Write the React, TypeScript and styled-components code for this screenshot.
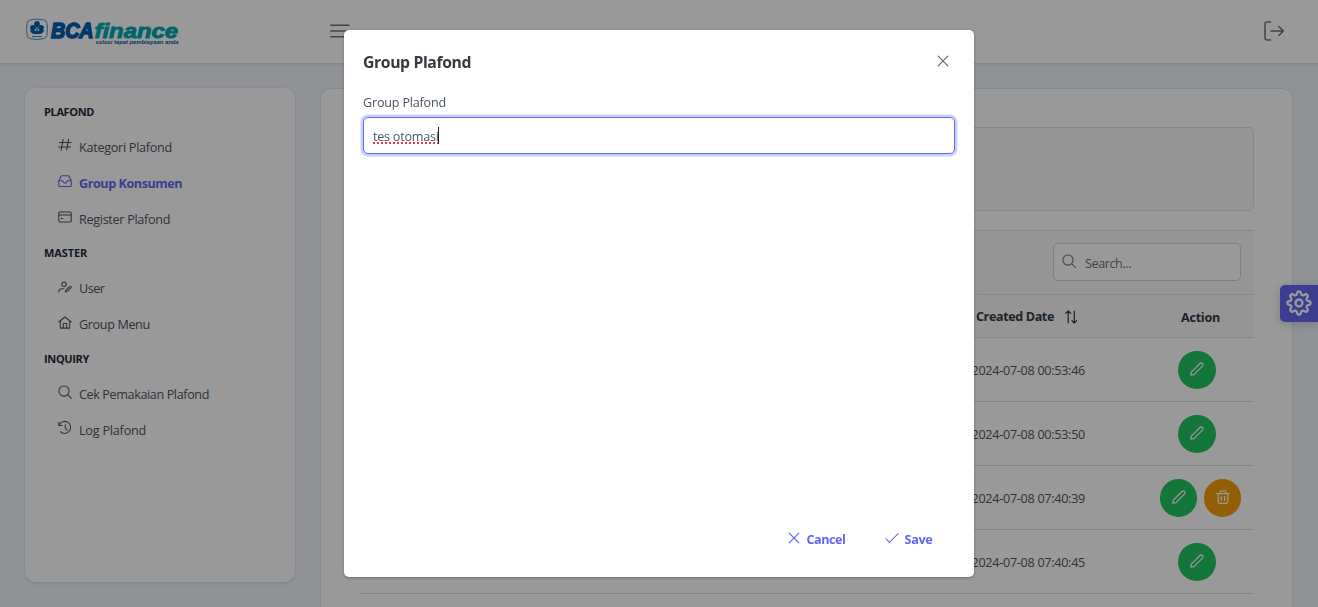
import React from 'react';
import styled, { createGlobalStyle, css } from 'styled-components';

const GlobalStyle = createGlobalStyle`
  *, *::before, *::after { box-sizing: border-box; }
  html, body { margin: 0; height: 607px; overflow: hidden; }
  body {
    background: #eff3f8;
    color: #4b5563;
    font-family: 'Open Sans', 'Noto Sans', sans-serif;
    font-size: 12.6px;
    line-height: 18px;
  }
`;

const cardShadow = css`
  box-shadow: 0 3px 5px rgba(0, 0, 0, 0.02), 0 0 2px rgba(0, 0, 0, 0.05), 0 1px 4px rgba(0, 0, 0, 0.08);
`;

/* ---------- icons ---------- */

const Icon = styled.svg<{ $size?: number }>`
  display: block;
  flex: none;
  width: ${({ $size = 14 }) => $size}px;
  height: ${({ $size = 14 }) => $size}px;
  fill: none;
  stroke: currentColor;
  stroke-width: 1.05;
  stroke-linecap: round;
  stroke-linejoin: round;
  overflow: visible;
`;

const HashIcon = () => (
  <Icon viewBox="0 0 14 14">
    <path d="M5.2 1.2 3.2 12.2M10.6 1.2 8.6 12.2M1.4 4.4h11.8M.6 9h11.8" />
  </Icon>
);
const InboxIcon = () => (
  <Icon viewBox="0 0 14 14">
    <path d="M.7 7 2.9 2.3Q3.2 1.7 3.9 1.7h6.2q.7 0 1 .6L13.3 7v4.4q0 1-1 1H1.7q-1 0-1-1ZM.9 6.7h3.4c.5 0 .6.3.8.8.4 1 .9 1.6 1.9 1.6s1.5-.6 1.9-1.6c.2-.5.3-.8.8-.8h3.4" />
  </Icon>
);
const CardIcon = () => (
  <Icon viewBox="0 0 14 14">
    <rect x=".8" y="2" width="12.4" height="10" rx="1" />
    <path d="M.8 5h12.4M3.1 8.5h1.7" />
  </Icon>
);
const UserEditIcon = () => (
  <Icon viewBox="0 0 14 14">
    <circle cx="6" cy="4.2" r="2.2" />
    <path d="M.7 12c0-2.2 1.5-3.3 3.6-3.3h1.5M7.4 12l.3-1.7 3.9-3.7c.9-.9 2.2.4 1.3 1.3L9 11.6Z" />
  </Icon>
);
const HomeIcon = () => (
  <Icon viewBox="0 0 14 14">
    <path d="M.7 6 7 1l6.3 5M2.3 4.9v7.2h9.4V4.9M5.3 12V7.4h3.4V12" />
  </Icon>
);
const SearchIcon = () => (
  <Icon viewBox="0 0 14 14">
    <circle cx="6" cy="6" r="5.1" />
    <path d="m9.8 9.8 3.6 3.6" />
  </Icon>
);
const HistoryIcon = () => (
  <Icon viewBox="0 0 14 14">
    <path d="M.8 1.3v3.2H4M1 4.3a6 6 0 1 1 1.4 6.4M7.3 3.7v3.6l2.2 1.9" />
  </Icon>
);
const MenuIcon = () => (
  <Icon viewBox="0 0 20 20" $size={20}>
    <path strokeWidth="1.6" d="M.8 4.2h18M.8 10h18M.8 15.7h18" />
  </Icon>
);
const LogoutIcon = () => (
  <Icon viewBox="0 0 20 20" $size={20}>
    <path strokeWidth="1.5" d="M6.5 1H2.7Q1 1 1 2.7v14.6Q1 19 2.7 19h3.8M7 10h12.3M14.8 5.5l4.5 4.5-4.5 4.5" />
  </Icon>
);
const TimesIcon = () => (
  <Icon viewBox="0 0 12 12" $size={12}>
    <path strokeWidth="1.15" d="m1.2 1.2 9.6 9.6M10.8 1.2 1.2 10.8" />
  </Icon>
);
const CheckIcon = () => (
  <Icon viewBox="0 0 14 12">
    <path d="m.8 6.7 3.7 3.7 8.7-8.7" />
  </Icon>
);
const SortIcon = () => (
  <Icon viewBox="0 0 14 14">
    <path strokeWidth="1.2" d="M4.2 13V.9M1.7 3.4 4.2.9l2.5 2.5M10.3 1v12M7.9 10.6l2.4 2.4 2.4-2.4" />
  </Icon>
);
const PencilIcon = () => (
  <Icon viewBox="0 0 14 14">
    <path strokeWidth="1.2" d="m.8 13.2.5-3.1L9.9 1.5c1.7-1.7 4.3.9 2.6 2.6L3.9 12.7Z" />
  </Icon>
);
const TrashIcon = () => (
  <Icon viewBox="0 0 14 14">
    <path strokeWidth="1.2" d="M.7 3.6h12.6M2.2 3.6v8q0 1.7 1.7 1.7h6.2q1.7 0 1.7-1.7v-8M4.2 3.4V1.9Q4.2.8 5.3.8h3.4q1.1 0 1.1 1.1v1.5M5.4 6.5v4M8.6 6.5v4" />
  </Icon>
);
const GearIcon = () => {
  const points: string[] = [];
  for (let i = 0; i <= 160; i += 1) {
    const a = (i / 160) * Math.PI * 2;
    const wave = Math.cos(a * 8);
    const r = 10 + 1.6 * Math.tanh(wave * 1.8);
    points.push(`${(13 + r * Math.sin(a)).toFixed(2)} ${(13 - r * Math.cos(a)).toFixed(2)}`);
  }
  return (
    <Icon viewBox="0 0 26 26" $size={26}>
      <path strokeWidth="2.3" d={`M${points.join('L')}Z`} />
      <circle cx="13" cy="13" r="3.5" strokeWidth="2.3" />
    </Icon>
  );
};

/* ---------- top bar ---------- */

const Topbar = styled.header`
  position: relative;
  display: flex;
  align-items: center;
  height: 63px;
  padding: 0 34px 2px 25px;
  background: #fff;
  ${cardShadow}
`;
const LogoLink = styled.a`
  display: block;
  width: 304.5px;
  height: 32px;
`;
const LogoArt = styled.svg`
  display: block;
  width: 156px;
  height: 34px;
  overflow: visible;
  font-family: 'Liberation Sans', Arial, sans-serif;
  font-weight: 700;
  font-style: italic;
`;
const LogoutButton = styled.button`
  margin-left: auto;
  padding: 0;
  border: 0;
  background: none;
  color: #6b7280;
`;
const MenuButton = styled(LogoutButton)`
  margin-left: 0;
`;

const Logo = () => (
  <LogoArt viewBox="0 0 156 34">
    <path
      d="M5.5 4.8Q12 3.4 18.5 4.8 21.8 5.3 22 8.5 22.8 14.5 22 20 21.5 23.2 18.5 23.7 12 25.2 5.5 23.7 2.5 23.2 2 20 1.2 14.500 2 8.500 2.200 5.300 5.500 4.800Z"
      fill="none"
      stroke="#0060af"
      strokeWidth=".7"
    />
    <g fill="#0060af">
      <ellipse cx="12" cy="9" rx="2.9" ry="3.1" />
      <ellipse cx="8" cy="12.6" rx="2.9" ry="2.6" />
      <ellipse cx="16" cy="12.6" rx="2.9" ry="2.6" />
      <path d="M11.6 10.400h.8l.3 5.800q3-2.200 6.300-1.500-.5 4-5 4.300h-4q-4.500-.3-5-4.300 3.300-.7 6.300 1.500Z" />
      <rect x="7" y="21" width="10" height="1.100" rx=".5" opacity=".75" />
    </g>
    <text x="26" y="22.9" fontSize="21.3" textLength="42.5" lengthAdjust="spacingAndGlyphs" fill="#0060af" stroke="#0060af" strokeWidth="1.6">BCA</text>
    <text x="69.5" y="22.9" fontSize="20.6" textLength="83.5" lengthAdjust="spacingAndGlyphs" fill="#00a9b2" stroke="#00a9b2" strokeWidth=".9">finance</text>
    <text x="70.5" y="29.3" fontSize="6" textLength="83" lengthAdjust="spacingAndGlyphs" fill="#0060af">solusi tepat pembiayaan anda</text>
  </LogoArt>
);

/* ---------- page body ---------- */

const Label = styled.span<{ $track?: number }>`
  letter-spacing: ${({ $track = -0.3 }) => $track}px;
  white-space: nowrap;
`;

const Body = styled.div`
  display: flex;
  align-items: flex-start;
  gap: 25px;
  height: 544px;
  padding: 25px 25px 0;
  overflow: hidden;
`;
const Sidebar = styled.nav`
  flex: none;
  width: 270px;
  height: 494px;
  padding: 7px 19px;
  border-radius: 11px;
  background: #fff;
  ${cardShadow}
`;
const SectionTitle = styled.div`
  height: 33.5px;
  padding-top: 7.7px;
  color: #1f2937;
  font-size: 11px;
  font-weight: 700;
`;
const MenuItem = styled.a<{ $active?: boolean }>`
  display: flex;
  align-items: center;
  gap: 7px;
  height: 36px;
  padding: 2px 14px 0;
  color: ${({ $active }) => ($active ? '#6366f1' : '#4b5563')};
  font-weight: ${({ $active }) => ($active ? 700 : 400)};

  svg { margin-top: -5px; }
`;

const Card = styled.main`
  flex: none;
  width: 972.5px;
  height: 600px;
  padding: 38px 38px 37px 37.5px;
  border: 1px solid #dfe7ef;
  border-radius: 11px;
  background: #fff;
  margin-top: 0.4px;
`;
const Toolbar = styled.div`
  height: 84px;
  margin-bottom: 19px;
  border: 1px solid #dee2e6;
  border-radius: 5px;
  background: #f8f9fa;
`;
const TableHeader = styled.div`
  display: flex;
  align-items: flex-start;
  justify-content: flex-end;
  height: 64px;
  padding: 12px 13px 0;
  border-top: 1px solid #dfe7ef;
  background: #f8f9fa;
`;
const SearchBox = styled.div`
  display: flex;
  align-items: center;
  gap: 9.5px;
  width: 188px;
  height: 38px;
  padding: 4px 7.5px 0 8px;
  border: 1px solid #ced4da;
  border-radius: 5px;
  background: #fff;
  color: #6b7280;

  svg { margin-top: -6px; }
`;
const Row = styled.div<{ $head?: boolean }>`
  display: grid;
  grid-template-columns: 1fr 174px 108px;
  align-items: center;
  height: ${({ $head }) => ($head ? 44 : 64)}px;
  padding-top: ${({ $head }) => ($head ? 2 : 0.6)}px;
  border-bottom: 1px solid ${({ $head }) => ($head ? '#dfe7ef' : '#dee2e6')};
  ${({ $head }) =>
    $head &&
    css`
      border-top: 1px solid #dfe7ef;
      background: #f8f9fa;
      color: #343a40;
      font-weight: 700;
    `}
`;
const DateHead = styled.div`
  display: flex;
  grid-column: 2;
  align-items: center;
  gap: 10.5px;
  padding-left: 4.5px;
`;
const DateCell = styled.div`
  grid-column: 2;
  padding-top: 2.4px;
`;
const ActionCell = styled.div<{ $pair?: boolean }>`
  display: flex;
  justify-content: center;
  gap: ${({ $pair }) => ($pair ? 6.5 : 0)}px;
  padding-left: ${({ $pair }) => ($pair ? 2 : 1)}px;
  padding-right: ${({ $pair }) => ($pair ? 0 : 6)}px;
`;
const ActionHead = styled(ActionCell)`
  padding: 2px 0 0 2px;
`;
const RoundButton = styled.button<{ $tone: 'edit' | 'remove' }>`
  display: grid;
  place-items: center;
  width: 37.5px;
  height: 38px;
  padding: 0 0 2px;
  border: 0;
  border-radius: 50%;
  background: ${({ $tone }) => ($tone === 'edit' ? '#22c55e' : '#f59e0b')};
  color: #fff;
`;
const SettingsTab = styled.button`
  position: fixed;
  top: 285px;
  right: 0;
  display: grid;
  place-items: center;
  width: 38px;
  height: 37px;
  padding: 0 0 1px;
  border: 0;
  border-radius: 5px 0 0 5px;
  background: #6366f1;
  color: #fff;
  box-shadow: 0 2px 10px rgba(0, 0, 0, 0.2);
`;

/* ---------- dialog ---------- */

const Mask = styled.div`
  position: fixed;
  inset: 0;
  display: flex;
  align-items: center;
  justify-content: center;
  background: rgba(0, 0, 0, 0.4);
`;
const Dialog = styled.section`
  display: flex;
  flex-direction: column;
  width: 630px;
  height: 547px;
  padding: 0 19px;
  border-radius: 5px;
  background: #fff;
  box-shadow: 0 1px 3px rgba(0, 0, 0, 0.3);
`;
const DialogHeader = styled.header`
  display: flex;
  align-items: center;
  justify-content: space-between;
  height: 64px;
  padding-right: 6px;
  color: #343a40;
  font-size: 15.75px;
  font-weight: 700;
`;
const CloseButton = styled.button`
  display: block;
  padding: 0 0 2px;
  border: 0;
  background: none;
  color: #5f6b7a;
`;
const Field = styled.label`
  display: flex;
  flex: 1;
  flex-direction: column;
  gap: 5px;
  font-weight: 500;
`;
const TextInput = styled.div`
  display: flex;
  align-items: center;
  height: 37px;
  padding: 2px 9px 0;
  border: 1px solid #6366f1;
  border-radius: 5px;
  box-shadow: 0 0 0 2.5px #c7d2fe;
  font-weight: 400;
`;
const Typed = styled(Label)`
  text-decoration: underline dotted #f03a3a 1.5px;
  text-decoration-skip-ink: none;
  text-underline-offset: 2px;
`;
const Caret = styled.i`
  width: 1px;
  height: 17px;
  margin: -2px 0 0 -0.5px;
  background: #222;
`;
const DialogFooter = styled.footer`
  display: flex;
  justify-content: flex-end;
  gap: 39px;
  height: 46px;
  padding-right: 22.5px;
`;
const TextButton = styled.button`
  display: flex;
  align-items: center;
  gap: 6px;
  height: 18px;
  padding: 0;
  border: 0;
  background: none;
  color: #6366f1;
  font: inherit;
  font-weight: 700;

  svg { margin-top: -4px; }
`;

type Item = { text: string; icon: React.ReactNode; track: number; active?: boolean };

const menu: { title: string; track: number; items: Item[] }[] = [
  {
    title: 'PLAFOND',
    track: -0.37,
    items: [
      { text: 'Kategori Plafond', icon: <HashIcon />, track: -0.27 },
      { text: 'Group Konsumen', icon: <InboxIcon />, track: -0.44, active: true },
      { text: 'Register Plafond', icon: <CardIcon />, track: -0.3 },
    ],
  },
  {
    title: 'MASTER',
    track: -0.1,
    items: [
      { text: 'User', icon: <UserEditIcon />, track: -0.5 },
      { text: 'Group Menu', icon: <HomeIcon />, track: -0.36 },
    ],
  },
  {
    title: 'INQUIRY',
    track: -0.35,
    items: [
      { text: 'Cek Pemakaian Plafond', icon: <SearchIcon />, track: -0.38 },
      { text: 'Log Plafond', icon: <HistoryIcon />, track: -0.2 },
    ],
  },
];

const rows = [
  { date: '2024-07-08 00:53:46', removable: false },
  { date: '2024-07-08 00:53:50', removable: false },
  { date: '2024-07-08 07:40:39', removable: true },
  { date: '2024-07-08 07:40:45', removable: false },
];

export default function App() {
  return (
    <>
      <GlobalStyle />
      <Topbar>
        <LogoLink><Logo /></LogoLink>
        <MenuButton aria-label="Menu"><MenuIcon /></MenuButton>
        <LogoutButton aria-label="Log out"><LogoutIcon /></LogoutButton>
      </Topbar>
      <Body>
        <Sidebar>
          {menu.map((section) => (
            <div key={section.title}>
              <SectionTitle><Label $track={section.track}>{section.title}</Label></SectionTitle>
              {section.items.map((item) => (
                <MenuItem key={item.text} $active={item.active}>
                  {item.icon}
                  <Label $track={item.track}>{item.text}</Label>
                </MenuItem>
              ))}
            </div>
          ))}
        </Sidebar>
        <Card>
          <Toolbar />
          <TableHeader>
            <SearchBox>
              <SearchIcon />
              <Label $track={-0.42}>Search...</Label>
            </SearchBox>
          </TableHeader>
          <Row $head>
            <DateHead><Label $track={-0.4}>Created Date</Label><SortIcon /></DateHead>
            <ActionHead><Label $track={-0.26}>Action</Label></ActionHead>
          </Row>
          {rows.map((row) => (
            <Row key={row.date}>
              <DateCell><Label $track={-0.28}>{row.date}</Label></DateCell>
              <ActionCell $pair={row.removable}>
                <RoundButton $tone="edit" aria-label="Edit"><PencilIcon /></RoundButton>
                {row.removable && (
                  <RoundButton $tone="remove" aria-label="Delete"><TrashIcon /></RoundButton>
                )}
              </ActionCell>
            </Row>
          ))}
        </Card>
      </Body>
      <SettingsTab aria-label="Settings"><GearIcon /></SettingsTab>
      <Mask>
        <Dialog role="dialog">
          <DialogHeader>
            <Label $track={-0.39}>Group Plafond</Label>
            <CloseButton aria-label="Close"><TimesIcon /></CloseButton>
          </DialogHeader>
          <Field>
            <Label $track={-0.2}>Group Plafond</Label>
            <TextInput>
              <Typed $track={-0.25}>tes otomasi</Typed>
              <Caret />
            </TextInput>
          </Field>
          <DialogFooter>
            <TextButton><TimesIcon /><Label $track={-0.44}>Cancel</Label></TextButton>
            <TextButton><CheckIcon /><Label $track={-0.29}>Save</Label></TextButton>
          </DialogFooter>
        </Dialog>
      </Mask>
    </>
  );
}
